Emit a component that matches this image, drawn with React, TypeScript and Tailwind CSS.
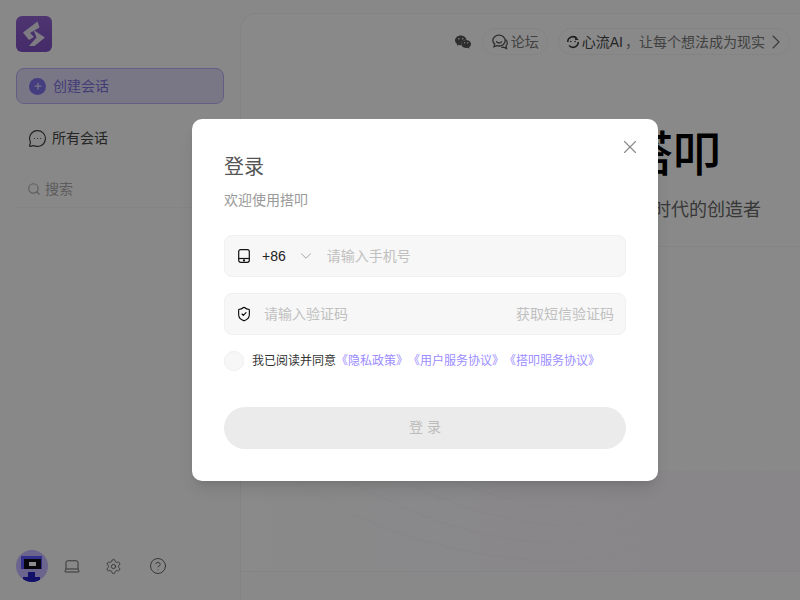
import { ChevronDown, ChevronRight, CircleHelp, Laptop, MessageCircleMore, Search, Settings, ShieldCheck, X, Plus } from "lucide-react";
import { SiWechat } from "react-icons/si";

const font = "font-['Liberation_Sans','Noto_Sans_CJK_SC',sans-serif]";

function Logo() {
  return (
    <div className="w-9 h-9 rounded-md bg-gradient-to-b from-[#8e62ce] to-[#7d4fc0] flex items-center justify-center">
      <svg width="36" height="36" viewBox="0 0 36 36">
        <path d="M21.500 5.500 L23.500 11.500 L14 17 L18 21 L13 24 L7 16.500 Z" fill="#e6e0ef" />
        <path d="M17.500 14 L29 21.500 L18.500 30 L13 30 L20.500 21.500 Z" fill="#e6e0ef" />
      </svg>
    </div>
  );
}

function Avatar() {
  return (
    <div className="w-8 h-8 rounded-full bg-[#c4b6ff] overflow-hidden flex items-center justify-center">
      <svg width="32" height="32" viewBox="0 0 32 32" shapeRendering="crispEdges">
        <rect x="5" y="6" width="21" height="13" fill="#5a55ff" />
        <rect x="8" y="9" width="17" height="10" fill="#0b0b14" />
        <rect x="13" y="12" width="7" height="4" fill="#ffffff" />
        <rect x="12" y="22" width="7" height="6" fill="#2220c0" />
        <rect x="7" y="27" width="17" height="5" fill="#2220c0" />
      </svg>
    </div>
  );
}

function ForumIcon() {
  return (
    <svg width="18" height="18" viewBox="0 0 18 18" fill="none" stroke="#555" strokeWidth="1.300">
      <path d="M8 2.200c3.400 0 6.200 2.400 6.200 5.400s-2.800 5.400-6.200 5.400c-.8 0-1.500-.1-2.200-.4L3 13.600l.7-2.500C2.500 10.100 1.800 8.900 1.800 7.600c0-3 2.800-5.400 6.200-5.400z" />
      <path d="M5.500 8.800c.7.8 1.600 1.200 2.600 1.200s1.900-.4 2.500-1.200" strokeLinecap="round" />
      <path d="M14.500 6.500c1.100.8 1.800 2 1.800 3.400 0 1.100-.5 2.200-1.300 3l.6 2.700-3-1.400c-.8.200-1.500.2-2.300.1" />
    </svg>
  );
}

function FlowIcon() {
  return (
    <svg width="14" height="14" viewBox="0 0 16 16" fill="none" stroke="#3a3a3a" strokeWidth="1.800">
      <path d="M2 8a6 6 0 0 1 10.500-4" />
      <path d="M14 8a6 6 0 0 1-10.500 4" />
      <path d="M5.500 7.500h.01M10.500 7.500h.01" strokeLinecap="round" />
      <path d="M11 2v3h3" strokeWidth="1.200" />
    </svg>
  );
}

function PhoneIcon() {
  return (
    <svg width="12" height="14" viewBox="0 0 12 14" fill="none" stroke="#111" strokeWidth="1.200">
      <rect x=".7" y=".7" width="10.600" height="12.600" rx="2" />
      <path d="M.7 9.500h10.600" />
      <circle cx="6" cy="11.400" r=".5" fill="#111" />
    </svg>
  );
}

function Waves() {
  return (
    <svg className="w-full h-full" viewBox="0 0 559 100" preserveAspectRatio="none" fill="none" stroke="#f6f3f8" strokeWidth="1">
      <path d="M40 0C120 60 220 85 300 90S480 50 520 0" />
      <path d="M90 0C170 45 240 70 310 72S440 40 480 0" />
      <path d="M140 0C200 30 260 52 315 54S410 30 440 0" />
      <path d="M190 0C230 18 280 36 320 36S380 20 400 0" />
    </svg>
  );
}

export default function App() {
  return (
    <div className={`relative w-[800px] h-[600px] overflow-hidden bg-[#f8f8f8] flex ${font}`}>
      <aside className="w-[240px] shrink-0 flex flex-col pt-4 px-4 pb-[18px]">
        <Logo />
        <button className="mt-4 h-9 w-52 rounded-lg border border-[#b5aef0] bg-[#dcd7f3] flex items-center pl-3 gap-[7px] text-sm text-[#7a70d8]">
          <span className="w-[17px] h-[17px] rounded-full bg-[#7c6fe8] flex items-center justify-center">
            <Plus size={10} color="#ddd8f8" strokeWidth={3} />
          </span>
          创建会话
        </button>
        <div className="mt-4 h-9 pl-3 flex items-center gap-[5px] text-sm text-[#444]">
          <MessageCircleMore size={19} strokeWidth={1.500} />
          所有会话
        </div>
        <div className="mt-4 h-9 pl-[11px] w-[224px] -mr-4 pb-[2px] flex items-center gap-1 border-b border-[#f0f0f0] text-sm text-[#aaa]">
          <Search size={14} />
          搜索
        </div>
        <div className="mt-auto flex items-center">
          <Avatar />
          <Laptop size={18} strokeWidth={1.200} color="#555" className="ml-[15px]" />
          <Settings size={17} strokeWidth={1.200} color="#555" className="ml-[24px]" />
          <CircleHelp size={18} strokeWidth={1.200} color="#555" className="ml-[27px]" />
        </div>
      </aside>
      <main className="flex-1 mt-[13px] rounded-tl-2xl border-l border-t border-[#eeeeee] bg-[#fafafa] flex flex-col overflow-hidden">
        <header className="flex justify-end items-center h-[46px] pt-[9px] pr-[10px] gap-[10px]">
          <SiWechat size={16} color="#555" className="mr-[1px]" />
          <div className="h-[27px] pl-2 pr-2 rounded-full border border-[#eeeeee] flex items-center gap-[2px] text-sm text-[#777]">
            <ForumIcon />
            论坛
          </div>
          <div className="h-[27px] pl-[7px] pr-[1px] rounded-full border border-[#eeeeee] flex items-center gap-[2px] text-sm text-[#777]">
            <FlowIcon />
            <span className="text-[#444]">心流AI</span>，让每个想法成为现实
            <ChevronRight size={24} strokeWidth={1.100} color="#666" className="-ml-[3px]" />
          </div>
        </header>
        <div className="h-[187px] border-b border-[#f0f0f0] flex flex-col items-end">
          <h1 className="mt-[63px] mr-[79px] text-5xl leading-[64px] font-medium text-black">搭叩</h1>
          <p className="mt-[11px] mr-[39px] text-lg leading-6 text-[#666]">成为 AI 时代的创造者</p>
        </div>
        <div className="h-[325px] border-b border-[#f0f0f0] flex flex-col justify-end">
          <div className="h-[100px] bg-gradient-to-r from-[#fbfbfb] via-[#f9f6fb] to-[#f8f4fa]">
            <Waves />
          </div>
        </div>
      </main>

      <div className="absolute inset-0 bg-black/45 flex items-center justify-center pl-[50px]">
        <div className="relative w-[466px] h-[362px] shrink-0 rounded-[10px] bg-white shadow-lg px-8 pt-[31px]">
          <X size={22} strokeWidth={1.200} color="#888" className="absolute top-[17px] right-[17px]" />
          <h2 className="text-xl leading-[34px] text-[#555]">登录</h2>
          <p className="mt-[4px] text-sm leading-[24px] text-[#999]">欢迎使用搭叩</p>
          <div className="mt-[23px] h-[42px] rounded-lg border border-[#f0f0f0] bg-[#f7f7f7] flex items-center pl-[13px] text-sm">
            <PhoneIcon />
            <span className="ml-[12px] text-[#222]">+86</span>
            <ChevronDown size={18} strokeWidth={1} color="#888" className="ml-[11px]" />
            <input className="ml-[12px] flex-1 bg-transparent outline-none placeholder:text-[#c0c0c0]" placeholder="请输入手机号" />
          </div>
          <div className="mt-4 h-[42px] rounded-lg border border-[#f0f0f0] bg-[#f7f7f7] flex items-center pl-[11px] pr-[11px] text-sm">
            <ShieldCheck size={16} strokeWidth={1.600} color="#000" />
            <input className="ml-[12px] flex-1 bg-transparent outline-none placeholder:text-[#c0c0c0]" placeholder="请输入验证码" />
            <span className="text-[#c0c0c0]">获取短信验证码</span>
          </div>
          <div className="mt-4 h-5 flex items-center text-xs">
            <span className="w-5 h-5 rounded-full border border-[#eeeeee] bg-[#f7f7f7]" />
            <span className="ml-2 text-[#333]">我已阅读并同意</span>
            <span className="text-[#9b8cff] [text-spacing-trim:space-all]">《隐私政策》</span>
            <span className="text-[#9b8cff] [text-spacing-trim:space-all]">《用户服务协议》</span>
            <span className="text-[#9b8cff] [text-spacing-trim:space-all]">《搭叩服务协议》</span>
          </div>
          <button className="mt-9 w-full h-[42px] pb-[2px] rounded-full bg-[#ebebeb] text-sm text-[#bbb]">登 录</button>
        </div>
      </div>
    </div>
  );
}
